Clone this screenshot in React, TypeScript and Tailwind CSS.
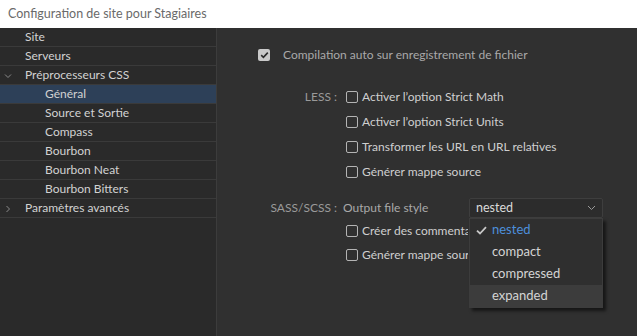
import React from "react";

const font = { fontFamily: "Lato, 'Noto Sans', sans-serif" };

function Chevron({ down }: { down?: boolean }) {
  return (
    <svg width="8" height="8" viewBox="0 0 8 8" className="absolute left-[4px] top-[6px]">
      {down ? (
        <path d="M1 2.5 L4 5.5 L7 2.5" fill="none" stroke="#8a8a8a" strokeWidth="1" />
      ) : (
        <path d="M2.5 1 L5.5 4 L2.5 7" fill="none" stroke="#8a8a8a" strokeWidth="1" />
      )}
    </svg>
  );
}

function NavRow({
  label,
  level = 0,
  chevron,
  active,
}: {
  label: string;
  level?: number;
  chevron?: "down" | "right";
  active?: boolean;
}) {
  return (
    <div
      className={`relative h-[19px] border-b border-[#3a3a3a] flex items-center text-[12px] text-[#d2d2d2] ${
        active ? "bg-[#2d4058]" : ""
      } ${level ? "pl-[45px]" : "pl-[25px]"}`}
    >
      {chevron && <Chevron down={chevron === "down"} />}
      <span className="leading-none">{label}</span>
    </div>
  );
}

function Box({ checked }: { checked?: boolean }) {
  if (checked)
    return (
      <div className="w-[12px] h-[12px] rounded-[2px] bg-[#c9c9c9] flex items-center justify-center shrink-0">
        <svg width="9" height="8" viewBox="0 0 9 8">
          <path d="M1.2 4.2 L3.4 6.3 L7.8 1.6" fill="none" stroke="#2a2a2a" strokeWidth="1.6" />
        </svg>
      </div>
    );
  return <div className="w-[12px] h-[12px] rounded-[2px] border border-[#b4b4b4] shrink-0" />;
}

function CheckRow({ label, text, clip }: { label?: string; text: string; clip?: boolean }) {
  return (
    <div className="flex items-center h-[20px]">
      <div className="w-[121px] text-right text-[#9a9a9a] text-[12px] pr-[1px]">{label}</div>
      <div className="ml-[8px]">
        <Box />
      </div>
      <span
        className={`block ml-[4px] text-[12px] text-[#cfcfcf] whitespace-nowrap ${
          clip ? "max-w-[106px] overflow-hidden" : ""
        }`}
      >
        {text}
      </span>
    </div>
  );
}

export default function App() {
  return (
    <div className="w-[637px] h-[336px] flex flex-col overflow-hidden" style={font}>
      <div className="h-[28px] bg-white flex items-center pl-[8px] text-[12.5px] text-[#6a6a6a] shrink-0">
        Configuration de site pour Stagiaires
      </div>
      <div className="flex flex-1">
        <div className="w-[217px] bg-[#2a2a2a] border-r border-[#3c3c3c] shrink-0">
          <NavRow label="Site" />
          <NavRow label="Serveurs" />
          <NavRow label="Préprocesseurs CSS" chevron="down" />
          <NavRow label="Général" level={1} active />
          <NavRow label="Source et Sortie" level={1} />
          <NavRow label="Compass" level={1} />
          <NavRow label="Bourbon" level={1} />
          <NavRow label="Bourbon Neat" level={1} />
          <NavRow label="Bourbon Bitters" level={1} />
          <NavRow label="Paramètres avancés" chevron="right" />
        </div>
        <div className="flex-1 bg-[#303030] relative">
          <div className="mt-[17px] pl-[41px] flex items-center h-[20px]">
            <Box checked />
            <span className="ml-[13px] text-[12px] text-[#a9a9a9] whitespace-nowrap">
              Compilation auto sur enregistrement de fichier
            </span>
          </div>
          <div className="mt-[22px] flex flex-col gap-[5px]">
            <CheckRow label="LESS :" text="Activer l’option Strict Math" />
            <CheckRow text="Activer l’option Strict Units" />
            <CheckRow text="Transformer les URL en URL relatives" />
            <CheckRow text="Générer mappe source" />
          </div>
          <div className="mt-[16px] flex items-center h-[20px]">
            <div className="w-[121px] text-right text-[#9a9a9a] text-[12px] pr-[1px]">SASS/SCSS :</div>
            <span className="ml-[5px] text-[12px] text-[#a9a9a9]">Output file style</span>
            <div className="relative ml-auto mr-[34px] w-[134px] h-[20px] rounded-[2px] border border-[#3e3e3e] bg-[#2c2c2c] flex items-center pl-[6px] text-[12.5px] text-[#dadada]">
              nested
              <svg width="9" height="6" viewBox="0 0 9 6" className="absolute right-[6px] top-[6px]">
                <path d="M1 1 L4.5 4.5 L8 1" fill="none" stroke="#9a9a9a" strokeWidth="1" />
              </svg>
              <div className="absolute left-[-1px] top-[19px] w-[134px] bg-[#2f2f2f] border border-[#3c3c3c] shadow-[3px_3px_3px_rgba(0,0,0,0.55)] z-10">
                {[
                  { t: "nested", sel: true },
                  { t: "compact" },
                  { t: "compressed" },
                  { t: "expanded", hl: true },
                ].map((it) => (
                  <div
                    key={it.t}
                    className={`relative h-[22px] flex items-center pl-[22px] text-[13px] ${
                      it.sel ? "text-[#4d8fdc]" : "text-[#d4d4d4]"
                    } ${it.hl ? "bg-[#3c3c3c]" : ""}`}
                  >
                    {it.sel && (
                      <svg width="11" height="9" viewBox="0 0 11 9" className="absolute left-[6px] top-[7px]">
                        <path d="M1 4.6 L4 7.5 L10 1.2" fill="none" stroke="#c8c8c8" strokeWidth="1.8" />
                      </svg>
                    )}
                    {it.t}
                  </div>
                ))}
              </div>
            </div>
          </div>
          <div className="mt-[3px] flex flex-col gap-[4px]">
            <CheckRow text="Créer des commentaires de débogage" clip />
            <CheckRow text="Générer mappe source" clip />
          </div>
        </div>
      </div>
    </div>
  );
}
